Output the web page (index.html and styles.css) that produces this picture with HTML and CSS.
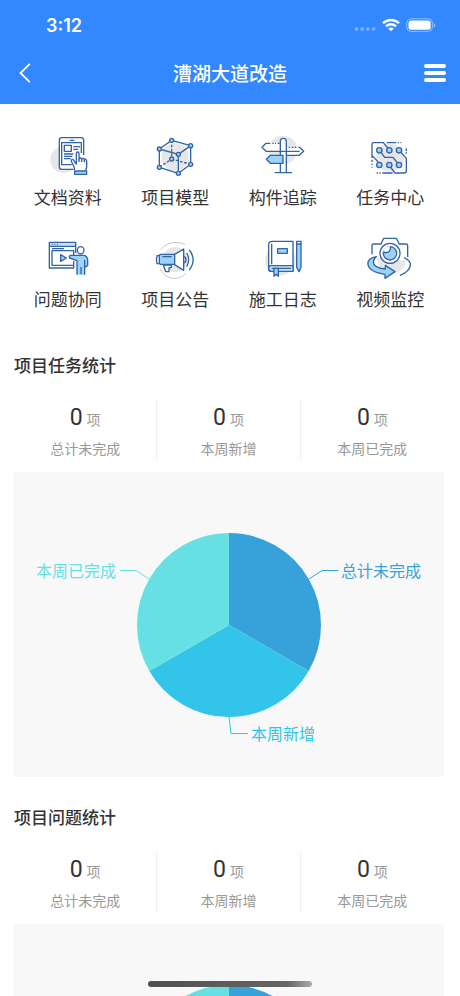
FILE: index.html
```html
<!DOCTYPE html>
<html lang="zh-CN">
<head>
<meta charset="utf-8">
<meta name="viewport" content="width=device-width, initial-scale=1">
<title>漕湖大道改造</title>
<link rel="stylesheet" href="styles.css">
</head>
<body>
<div class="app">
  <header class="header">
    <div class="status">
      <span class="time">3:12</span>
      <div class="status-icons">
        <svg width="22" height="14" viewBox="0 0 22 14" fill="#fff" opacity=".3"><circle cx="2.500" cy="11" r="2"/><circle cx="8.200" cy="11" r="2"/><circle cx="13.900" cy="11" r="2"/><circle cx="19.600" cy="11" r="2"/></svg>
        <svg width="18" height="14" viewBox="0 0 18 14" fill="none" stroke="#fff" stroke-width="2.500"><path d="M1 5.200C5.500 .8 12.500 .8 17 5.200M4 8.400C7 5.600 11 5.600 14 8.400"/><path d="M9 13.300 6.300 10.600Q9 8.600 11.700 10.600Z" fill="#fff" stroke="none"/></svg>
        <svg width="30" height="14" viewBox="0 0 30 14"><rect x=".8" y=".8" width="25.600" height="12.600" rx="4" fill="none" stroke="#fff" stroke-opacity=".45"/><rect x="2.500" y="2.500" width="22.200" height="9.200" rx="2.500" fill="#fff"/><path d="M27.700 5v4.500q1.600-.7 1.600-2.250T27.700 5Z" fill="#fff" opacity=".45"/></svg>
      </div>
    </div>
    <nav class="nav">
      <button class="nav-button nav-back" type="button" aria-label="返回"><svg width="12" height="20" viewBox="0 0 12 20" fill="none" stroke="#fff" stroke-width="1.800"><path d="M10.800 .8 1.500 10l9.300 9.200"/></svg></button>
      <h1 class="nav-title">漕湖大道改造</h1>
      <button class="nav-button nav-menu" type="button" aria-label="菜单"><svg width="22" height="20" viewBox="0 0 22 20" stroke="#fff" stroke-width="4" stroke-linecap="round"><path d="M2 3h18M2 10h18M2 17h18"/></svg></button>
    </nav>
  </header>

  <main class="content">
    <div class="shortcuts">
      <a class="shortcut" href="#docs">
        <svg class="icon" viewBox="72 21 144 144">
          <circle class="shade" cx="131" cy="104" r="40"/>
          <path class="paper" d="M191 88V46q0-8-8-8h-57q-8 0-8 8v79q0 8 8 8h36"/>
          <path class="line" d="M191 90V46q0-8-8-8h-57q-8 0-8 8v79q0 8 8 8h34M149 46h14M184 84V53h-59v66h30M133 61h21v18h-21zM160 65h20M160 73h14M132 87h28M132 94h25M132 101h20"/>
          <path class="paper line" d="M163 136v-8l-8-17q-3-8 3-8 4 1 6 8l5 6V86q0-5 4-5t4 5v16q4-6 8 0 5-4 8 1 7-1 7 6v17l-3 10"/>
          <path class="line" d="M177 102v9M185 102v9M193 104v8"/>
          <path class="fill line" d="M164 138h36v10h-36z"/>
        </svg>
        <span class="shortcut-label">文档资料</span>
      </a>
      <a class="shortcut" href="#model">
        <svg class="icon" viewBox="394 21 144 144">
          <circle class="shade" cx="466" cy="96" r="41"/>
          <path class="line" d="m419 72 37-26 57 16-37 26zM419 72v55l57 18V88M513 62v56l-37 27"/>
          <path class="line" stroke-dasharray="8 5" d="M456 46v56l-37 25M456 102l57 16"/>
          <g class="fill line"><circle cx="419" cy="72" r="6"/><circle cx="456" cy="46" r="6"/><circle cx="513" cy="62" r="6"/><circle cx="476" cy="88" r="6"/><circle cx="456" cy="102" r="6"/><circle cx="419" cy="127" r="6"/><circle cx="513" cy="118" r="6"/><circle cx="476" cy="145" r="6"/></g>
        </svg>
        <span class="shortcut-label">项目模型</span>
      </a>
      <a class="shortcut" href="#tracking">
        <svg class="icon" viewBox="86 21 144 144">
          <circle class="shade" cx="158" cy="75" r="43"/>
          <path class="paper" d="M148 55h-41L95 67l12 12h41zM169 67h40l12 12-12 13h-40z"/>
          <path class="line" d="M120 55h-13L95 67l12 12h101M142 55h6M126 55h4M134 55h3M169 91h38l13-12-12-12h-4M175 67h4M184 67h5M193 67h5"/>
          <path class="paper line" d="M150 142V49q0-9 9-9t9 9v93"/>
          <path class="line" d="M133 143h52M150 79h18"/>
          <path class="fill line" d="M158 91h-38l-12 12 12 12h38z"/>
        </svg>
        <span class="shortcut-label">构件追踪</span>
      </a>
      <a class="shortcut" href="#tasks">
        <svg class="icon" viewBox="409 21 144 144">
          <circle class="shade" cx="481" cy="98" r="42"/>
          <path class="line" d="M427 99V58q0-5 5-5h29l16 19M427 91l20 22M509 76l21 24v38q0 6-6 6h-28l-17-22M450 76l15 21h25l16 20"/>
          <path class="line" d="M471 53h29M504 53h4M512 53h3M530 70v8M530 82v4M427 104v7M427 116v4M427 125v3M441 144h4M449 144h4M458 144h31"/>
          <g class="fill line"><circle cx="449" cy="76" r="8"/><circle cx="479" cy="76" r="8"/><circle cx="508" cy="76" r="8"/><circle cx="449" cy="120" r="8"/><circle cx="479" cy="120" r="8"/><circle cx="508" cy="120" r="8"/></g>
        </svg>
        <span class="shortcut-label">任务中心</span>
      </a>
      <a class="shortcut" href="#issues">
        <svg class="icon" viewBox="72 18 144 144">
          <path class="soft" d="M88 43h79v12H88z"/>
          <path class="line" d="M167 75V43H88v77h73V99M88 55h79M161 82V68H96v44h65M95 49h3M103 49h3M111 49h3M96 62h36"/>
          <path class="fill line" d="m122 80 17 10-17 10z"/>
          <ellipse class="paper line" cx="182" cy="67" rx="10" ry="11"/>
          <path class="fill" d="M171 140V98l-22-8q-3-6 3-8h37q13 0 14 14v17l-9 5v22z"/>
          <path class="line" d="M171 140V98l-22-8q-3-6 3-8h37q13 0 14 14v17l-9 5v22M183 117v22M194 96v21"/>
        </svg>
        <span class="shortcut-label">问题协同</span>
      </a>
      <a class="shortcut" href="#notices">
        <svg class="icon" viewBox="394 18 144 144">
          <circle class="shade" cx="466" cy="95" r="38"/>
          <path class="arc" d="M422 66q22-28 59-22l15 6M421 122q11 24 38 29 26 2 40-16"/>
          <path class="line" d="M418 83h-6q-3 12 0 24h6"/>
          <path class="fill line" d="M423 79h42v30h-42q-4 0-4-5V84q0-5 4-5z"/>
          <path class="paper line" d="M431 111h24v7l-7 2v11h-10zM465 79l27-16v64l-27-17z"/>
          <path class="line" d="M428 86h28M492 86q7 0 7 9t-7 9M501 75q12 20 0 41M509 66q23 29 0 60"/>
        </svg>
        <span class="shortcut-label">项目公告</span>
      </a>
      <a class="shortcut" href="#diary">
        <svg class="icon" viewBox="86 18 144 144">
          <circle class="shade" cx="150" cy="96" r="46"/>
          <path class="paper line" d="M188 40h-62q-11 0-11 10v72q0 8 8 8h65z"/>
          <path class="soft line" d="M188 113h-65q-8 0-8 8 0 9 9 9h64z"/>
          <path class="line" d="M124 47v62M124 121h58"/>
          <path class="fill line" d="M142 62h29v14h-29zM131 121h13v24l-6-6-7 6zM199 48h13v70l-6 13-7-13z"/>
          <path class="line" d="M199 49v-9h13v9"/>
        </svg>
        <span class="shortcut-label">施工日志</span>
      </a>
      <a class="shortcut" href="#video">
        <svg class="icon" viewBox="409 18 144 144">
          <circle class="shade" cx="486" cy="94" r="43"/>
          <path class="paper" d="M427 84V48h28l8-17h38l8 17h26v49h-60z"/>
          <path class="line" d="M427 79V53q0-5 5-5h22l8-17h38l9 17h19q6 0 6 6v33"/>
          <circle class="paper line" cx="481" cy="76" r="30"/>
          <circle class="fill line" cx="481" cy="76" r="20"/>
          <path class="paper" d="M460 72q3-17 21-18 2 16-10 19-6 2-11-1z"/>
          <path class="line" d="M461 72q13 4 18-2 5-6 3-14"/>
          <path class="fill line" d="M440 86q-28 5-25 24 5 23 51 29v12l30-20-29-19v11q-37-5-36-22 0-8 9-15z"/>
          <path class="line" d="M523 89q21 9 19 23-3 19-31 30"/>
        </svg>
        <span class="shortcut-label">视频监控</span>
      </a>
    </div>

    <section class="panel">
      <h2 class="panel-title">项目任务统计</h2>
      <div class="stats">
        <div class="stat"><p class="stat-value"><span class="number">0</span> 项</p><p class="stat-label">总计未完成</p></div>
        <div class="stat"><p class="stat-value"><span class="number">0</span> 项</p><p class="stat-label">本周新增</p></div>
        <div class="stat"><p class="stat-value"><span class="number">0</span> 项</p><p class="stat-label">本周已完成</p></div>
      </div>
      <svg class="chart" viewBox="0 0 430 305" role="img" aria-label="项目任务统计">
        <path class="total-fill" d="M215 153V61A92 92 0 0 1 294.700 199Z"/>
        <path class="added-fill" d="M215 153 294.700 199A92 92 0 0 1 135.300 199Z"/>
        <path class="done-fill" d="M215 153 135.300 199A92 92 0 0 1 215 61Z"/>
        <path class="lead total-line" d="M295 107 308 98.500h16"/>
        <path class="lead added-line" d="m215 245 2 16.500h17"/>
        <path class="lead done-line" d="m135 107-13-8.500h-16"/>
        <text class="total-fill" x="327" y="105">总计未完成</text>
        <text class="added-fill" x="237" y="268">本周新增</text>
        <text class="done-fill" x="102" y="105" text-anchor="end">本周已完成</text>
      </svg>
    </section>

    <section class="panel">
      <h2 class="panel-title">项目问题统计</h2>
      <div class="stats">
        <div class="stat"><p class="stat-value"><span class="number">0</span> 项</p><p class="stat-label">总计未完成</p></div>
        <div class="stat"><p class="stat-value"><span class="number">0</span> 项</p><p class="stat-label">本周新增</p></div>
        <div class="stat"><p class="stat-value"><span class="number">0</span> 项</p><p class="stat-label">本周已完成</p></div>
      </div>
      <svg class="chart" viewBox="0 0 430 305" role="img" aria-label="项目问题统计">
        <path class="total-fill" d="M215 153V61A92 92 0 0 1 294.700 199Z"/>
        <path class="added-fill" d="M215 153 294.700 199A92 92 0 0 1 135.300 199Z"/>
        <path class="done-fill" d="M215 153 135.300 199A92 92 0 0 1 215 61Z"/>
      </svg>
    </section>
  </main>
  <div class="home-indicator"></div>
</div>
</body>
</html>
```
FILE: styles.css
```css
* {
  box-sizing: border-box;
}

body,
h1,
h2,
p {
  margin: 0;
}

body {
  background: #fff;
  color: #333;
  font-family: Inter, "Noto Sans CJK SC", sans-serif;
}

.app {
  display: flex;
  flex-direction: column;
  height: 100vh;
  overflow: hidden;
}

.header {
  flex: none;
  padding-bottom: 8px;
  background: #3388ff;
  color: #fff;
}

.status {
  display: flex;
  align-items: center;
  justify-content: space-between;
  height: 50px;
  padding: 0 24px 0 46px;
}

.time {
  font-size: 18px;
  font-weight: 600;
}

.status-icons {
  display: flex;
  align-items: center;
  gap: 6px;
}

.nav {
  display: flex;
  align-items: center;
  justify-content: space-between;
  height: 46px;
  padding: 0 14px;
}

.nav-button {
  display: flex;
  width: 22px;
  padding: 0;
  border: 0;
  background: none;
}

.nav-back {
  padding-left: 5px;
}

.nav-menu {
  justify-content: flex-end;
}

.nav-title {
  padding-top: 4px;
  font-size: 19px;
  font-weight: 500;
  line-height: 28px;
}

.content {
  flex: 1;
  min-height: 0;
  padding: 28px 16px 0 14px;
  overflow-y: auto;
  scrollbar-width: none;
}

.shortcuts {
  display: grid;
  grid-template-columns: repeat(4, 1fr);
  row-gap: 24px;
  margin-bottom: 42px;
}

.shortcut {
  display: flex;
  flex-direction: column;
  align-items: center;
  gap: 6px;
  color: #333;
  text-decoration: none;
}

.icon {
  width: 48px;
  height: 48px;
}

.shortcut-label {
  font-size: 17px;
  line-height: 24px;
}

.line {
  fill: none;
  stroke: #3464a3;
  stroke-width: 4;
  stroke-linejoin: round;
}

.shade {
  fill: #e6e7e9;
}

.paper {
  fill: #fff;
}

.fill {
  fill: #9bd3fb;
}

.soft {
  fill: #c5e3fa;
}

.arc {
  fill: none;
  stroke: #c5c7ca;
  stroke-width: 3;
}

.panel {
  margin-bottom: 29px;
}

.panel-title {
  margin-bottom: 22px;
  font-size: 17px;
  font-weight: 500;
  line-height: 24px;
}

.stats {
  display: grid;
  grid-template-columns: repeat(3, 1fr);
  margin-bottom: 12px;
}

.stat {
  height: 60px;
  padding-top: 6px;
  border-right: 1px solid #eee;
  color: #999;
  font-size: 14px;
  text-align: center;
}

.stat:last-child {
  border-right: 0;
}

.stat-value {
  margin-bottom: 7px;
  line-height: 24px;
}

.number {
  color: #333;
  font-family: Roboto, sans-serif;
  font-size: 23px;
}

.stat-label {
  line-height: 20px;
}

.chart {
  display: block;
  width: 100%;
  background: #f8f8f8;
  font-size: 16px;
}

.total-fill {
  fill: #37a2da;
}

.added-fill {
  fill: #32c5e9;
}

.done-fill {
  fill: #67e0e3;
}

.lead {
  fill: none;
  stroke-width: 1;
}

.total-line {
  stroke: #37a2da;
}

.added-line {
  stroke: #32c5e9;
}

.done-line {
  stroke: #67e0e3;
}

.home-indicator {
  position: fixed;
  bottom: 9px;
  left: 50%;
  width: 164px;
  height: 6px;
  border-radius: 3px;
  background: linear-gradient(90deg, #505050, #666 85%, #aaa);
  transform: translateX(-50%);
}
```
